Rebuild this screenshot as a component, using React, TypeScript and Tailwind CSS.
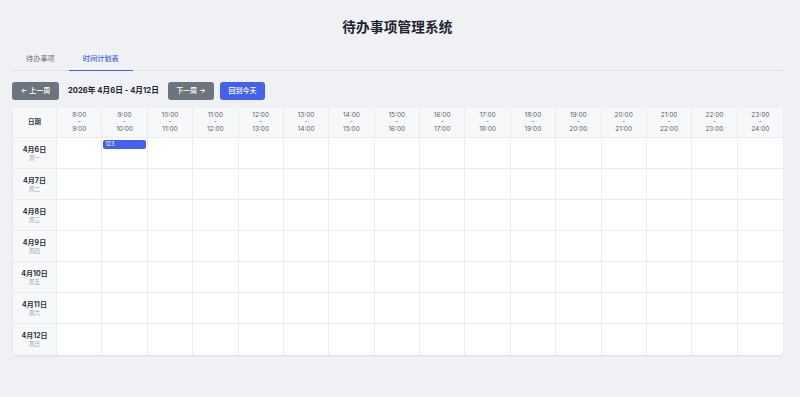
const hours = Array.from({ length: 16 }, (_, i) => i + 8);

const days = [
  { date: "4月6日", week: "周一" },
  { date: "4月7日", week: "周二" },
  { date: "4月8日", week: "周三" },
  { date: "4月9日", week: "周四" },
  { date: "4月10日", week: "周五" },
  { date: "4月11日", week: "周六" },
  { date: "4月12日", week: "周日" },
];

const events = [{ day: 0, hour: 9, title: "123" }];

export default function App() {
  return (
    <div
      className="min-h-[397px] bg-[#f0f1f5] text-[#1f2430] antialiased"
      style={{ fontFamily: '"Inter", "Noto Sans CJK SC", sans-serif' }}
    >
      <div className="ml-[12px] w-[771px] pt-[17px] opacity-[0.999]">
        <h1 className="text-center text-[13.6px] font-bold leading-[20px] tracking-[0.2px] text-[#1f2430]">
          待办事项管理系统
        </h1>

        <nav className="mt-[17px] flex border-b border-[#e2e3e8]">
          <button className="px-[14px] pb-[6px] text-[7.2px] leading-[10px] text-[#6b6f7a]">
            待办事项
          </button>
          <button className="-mb-px border-b-[1.5px] border-[#4361ee] px-[14px] pb-[6px] text-[7.2px] font-medium leading-[10px] text-[#4361ee]">
            时间计划表
          </button>
        </nav>

        <div className="mt-[11px] flex items-center">
          <button className="h-[18px] w-[47px] rounded-[3px] bg-[#6c757d] text-[7px] font-medium text-white">
            ← 上一周
          </button>
          <span className="ml-[9px] text-[7.7px] font-bold text-[#1f2430]">
            2026年 4月6日 - 4月12日
          </span>
          <button className="ml-[9px] h-[18px] w-[46px] rounded-[3px] bg-[#6c757d] text-[7px] font-medium text-white">
            下一周 →
          </button>
          <button className="ml-[6px] h-[18px] w-[45px] rounded-[3px] bg-[#4361ee] text-[7px] font-medium text-white">
            回到今天
          </button>
        </div>

        <div className="ml-[1px] mt-[8px] w-[770px] overflow-hidden rounded-[4px] bg-white shadow-[0_1px_2px_rgba(0,0,0,0.08)]">
          <div className="grid grid-cols-[44px_repeat(16,1fr)]">
            <div className="flex h-[30px] items-center justify-center border-b border-r border-[#ebecef] bg-[#f7f8fa] text-[6.5px] font-semibold text-[#3a3e47]">
              日期
            </div>
            {hours.map((h, i) => (
              <div
                key={h}
                className={`flex h-[30px] flex-col items-center justify-center border-b border-[#ebecef] bg-[#f7f8fa] text-[6.5px] leading-[7px] text-[#5a5e68] ${i < 15 ? "border-r" : ""}`}
              >
                <span>{h}:00</span>
                <span>-</span>
                <span>{h + 1}:00</span>
              </div>
            ))}

            {days.map((d, di) => (
              <div key={d.date} className="contents">
                <div
                  className={`flex h-[31px] flex-col items-center justify-center border-r border-[#ebecef] bg-[#f7f8fa] ${di < 6 ? "border-b" : ""}`}
                >
                  <span className="text-[7px] font-bold leading-[9px] text-[#2b2f38]">{d.date}</span>
                  <span className="text-[5.5px] leading-[8px] text-[#9a9ea8]">{d.week}</span>
                </div>
                {hours.map((h, i) => {
                  const ev = events.find((e) => e.day === di && e.hour === h);
                  return (
                    <div
                      key={h}
                      className={`relative h-[31px] border-[#ebecef] ${i < 15 ? "border-r" : ""} ${di < 6 ? "border-b" : ""}`}
                    >
                      {ev && (
                        <div className="absolute left-[1px] right-[1px] top-[2px] h-[9px] rounded-[2px] bg-[#4361ee] pl-[2px] text-[5.5px] leading-[9px] text-white">
                          {ev.title}
                        </div>
                      )}
                    </div>
                  );
                })}
              </div>
            ))}
          </div>
        </div>
      </div>
    </div>
  );
}
